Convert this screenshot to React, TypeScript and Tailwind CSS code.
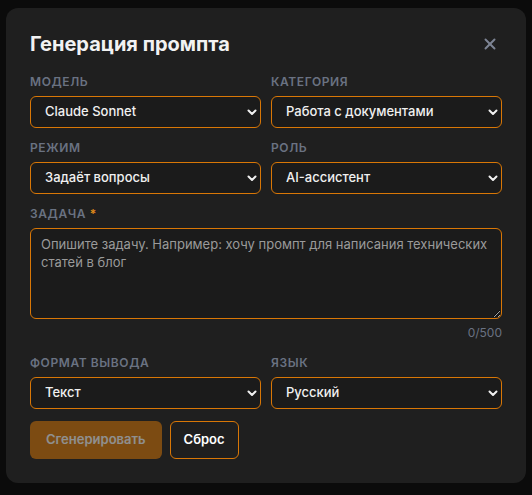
import { X } from 'lucide-react';

type Field = { label: string; value: string; options: string[] };

const top: Field[] = [
  { label: 'Модель', value: 'Claude Sonnet', options: ['Claude Sonnet', 'Claude Opus', 'Claude Haiku'] },
  { label: 'Категория', value: 'Работа с документами', options: ['Работа с документами', 'Код', 'Маркетинг'] },
  { label: 'Режим', value: 'Задаёт вопросы', options: ['Задаёт вопросы', 'Сразу отвечает'] },
  { label: 'Роль', value: 'AI-ассистент', options: ['AI-ассистент', 'Эксперт', 'Редактор'] },
];

const bottom: Field[] = [
  { label: 'Формат вывода', value: 'Текст', options: ['Текст', 'Markdown', 'JSON'] },
  { label: 'Язык', value: 'Русский', options: ['Русский', 'English'] },
];

function Label({ children }: { children: React.ReactNode }) {
  return (
    <div className="mb-1.5 text-xs leading-4 font-semibold tracking-wider text-gray-500 uppercase">
      {children}
    </div>
  );
}

function SelectField({ field }: { field: Field }) {
  return (
    <div className="flex flex-col">
      <Label>{field.label}</Label>
      <div className="relative">
        <select
          defaultValue={field.value}
          className="h-8 w-full appearance-none rounded-md border border-[#d97706] bg-[#1b1b1b] pr-8 pl-3.5 text-[13px] font-medium text-[#f0f0f0] outline-none"
        >
          {field.options.map((o) => (
            <option key={o}>{o}</option>
          ))}
        </select>
        <svg
          className="pointer-events-none absolute top-1/2 right-[3px] -translate-y-1/2"
          width="12"
          height="12"
          viewBox="0 0 12 12"
          fill="none"
        >
          <path d="M2.5 4.5 6 8l3.5-3.5" stroke="#f0f0f0" strokeWidth="2" strokeLinecap="round" strokeLinejoin="round" />
        </svg>
      </div>
    </div>
  );
}

export default function App() {
  return (
    <div className="min-h-[495px] bg-[#0b0b0b] px-1.5 pt-2 font-['Inter',sans-serif]">
      <div className="w-[520px] rounded-xl bg-[#1f1f1f] p-6">
        <div className="mb-[18px] flex items-center justify-between">
          <h2 className="text-xl leading-6 font-bold text-[#f2f2f2]">Генерация промпта</h2>
          <button type="button" className="mr-[3px] text-[#7d8494]">
            <X size={18} strokeWidth={2.6} />
          </button>
        </div>

        <div className="grid grid-cols-2 gap-x-2.5 gap-y-3">
          {top.map((f) => (
            <SelectField key={f.label} field={f} />
          ))}
        </div>

        <div className="mt-3">
          <Label>
            Задача <span className="text-[#e08a1a]">*</span>
          </Label>
          <textarea
            className="block h-[91px] w-full rounded-md border border-[#d97706] bg-[#1b1b1b] px-2.5 py-1.5 text-[13px] leading-[18px] text-[#e5e5e5] outline-none placeholder:text-[#9a9a9a]"
            placeholder="Опишите задачу. Например: хочу промпт для написания технических статей в блог"
          />
          <div className="mt-1.5 text-right text-xs leading-4 text-gray-500">0/500</div>
        </div>

        <div className="mt-3.5 grid grid-cols-2 gap-x-2.5">
          {bottom.map((f) => (
            <SelectField key={f.label} field={f} />
          ))}
        </div>

        <div className="mt-3 flex gap-2">
          <button
            type="button"
            disabled
            className="h-[38px] rounded-md bg-[#d97706] px-4 text-[13px] font-semibold text-white disabled:opacity-50"
          >
            Сгенерировать
          </button>
          <button
            type="button"
            className="h-[38px] rounded-md border border-[#d97706] px-[13px] text-[13px] font-semibold text-white"
          >
            Сброс
          </button>
        </div>
      </div>
    </div>
  );
}
